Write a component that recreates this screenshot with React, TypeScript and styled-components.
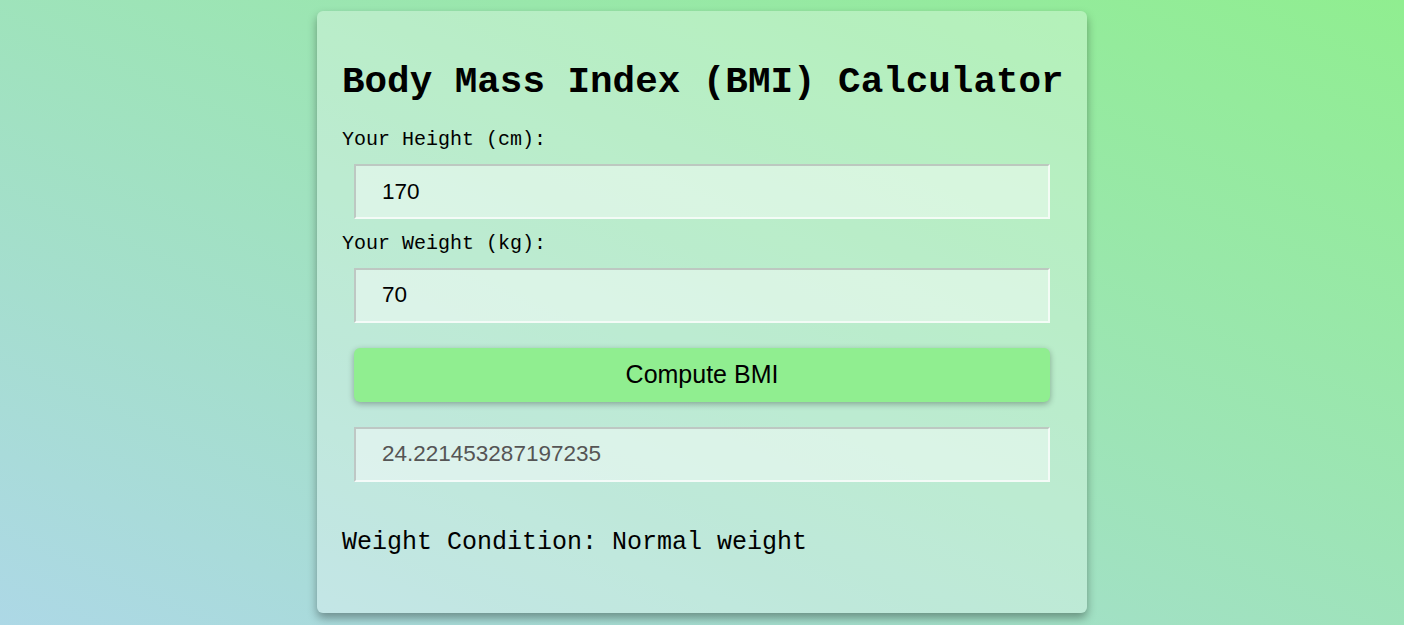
import styled, { createGlobalStyle } from "styled-components";

const GlobalStyle = createGlobalStyle`
  html, body {
    margin: 0;
    padding: 0;
  }

  body {
    min-height: 100vh;
    background: linear-gradient(to top right, #add8e6, #90ee90);
    font-family: "Liberation Mono", "Courier New", monospace;
  }
`;

const Page = styled.main`
  display: flex;
  justify-content: center;
  padding-top: 11px;
`;

const Card = styled.section`
  width: 720px;
  padding: 25px 25px 56px;
  background: rgba(255, 255, 255, 0.3);
  border-radius: 6px;
  box-shadow: 0 5px 10px rgba(0, 0, 0, 0.35);
`;

const Title = styled.h1`
  margin: 25px 0;
  font-size: 37.6px;
  font-weight: bold;
  color: #000;
  white-space: nowrap;
`;

const Label = styled.label`
  display: block;
  font-size: 20px;
  color: #000;
`;

const Field = styled.input<{ $result?: boolean }>`
  display: block;
  box-sizing: border-box;
  width: calc(100% - 24px);
  height: 55px;
  margin: ${({ $result }) => ($result ? "25px 12px 46px" : "13px 12px 12.5px")};
  padding: 0 26px;
  font-family: "Liberation Sans", Arial, sans-serif;
  font-size: 22.5px;
  color: ${({ $result }) => ($result ? "#555" : "#000")};
  background: rgba(255, 255, 255, 0.45);
  border: 2px solid;
  border-color: rgba(170, 170, 170, 0.6) rgba(255, 255, 255, 0.7)
    rgba(255, 255, 255, 0.7) rgba(170, 170, 170, 0.6);
  outline: none;
`;

const ComputeButton = styled.button`
  display: block;
  box-sizing: border-box;
  width: calc(100% - 24px);
  height: 54px;
  margin: 25px 12px 0;
  font-family: "Liberation Sans", Arial, sans-serif;
  font-size: 25px;
  color: #000;
  background: #90ee90;
  border: none;
  border-radius: 6px;
  box-shadow: 0 2px 6px rgba(0, 0, 0, 0.3);
  cursor: pointer;
`;

const Condition = styled.p`
  margin: 0;
  font-size: 25px;
  color: #000;
`;

export default function App() {
  const height = 170;
  const weight = 70;
  const bmi = weight / Math.pow(height / 100, 2);

  return (
    <>
      <GlobalStyle />
      <Page>
        <Card>
          <Title>Body Mass Index (BMI) Calculator</Title>
          <Label htmlFor="height">Your Height (cm):</Label>
          <Field id="height" type="text" defaultValue={String(height)} />
          <Label htmlFor="weight">Your Weight (kg):</Label>
          <Field id="weight" type="text" defaultValue={String(weight)} />
          <ComputeButton type="button">Compute BMI</ComputeButton>
          <Field $result readOnly value={String(bmi)} />
          <Condition>Weight Condition: Normal weight</Condition>
        </Card>
      </Page>
    </>
  );
}
